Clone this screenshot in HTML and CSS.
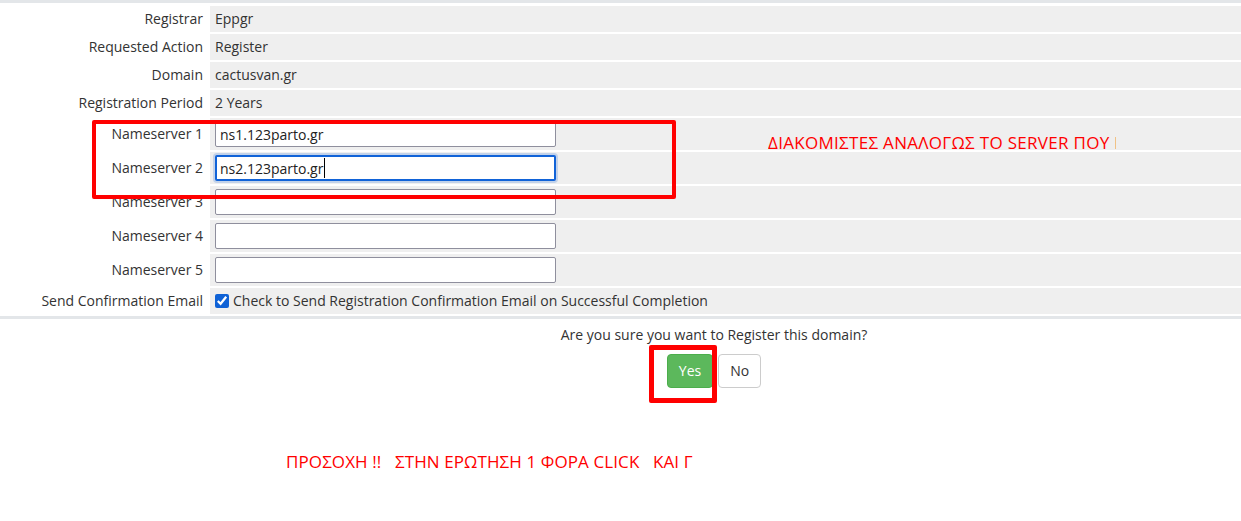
FILE: index.html
```html
<!DOCTYPE html>
<html lang="en">

<head>
    <meta charset="UTF-8">
    <meta name="viewport" content="width=device-width, initial-scale=1.0">
    <title>Domain Registration</title>
    <link rel="stylesheet" href="styles.css">
</head>

<body>

    <div class="page">
        <div class="form-table">
            <table>
                <tr>
                    <td class="label">Registrar</td>
                    <td class="value">Eppgr</td>
                </tr>
                <tr>
                    <td class="label">Requested Action</td>
                    <td class="value">Register</td>
                </tr>
                <tr>
                    <td class="label">Domain</td>
                    <td class="value">cactusvan.gr</td>
                </tr>
                <tr>
                    <td class="label">Registration Period</td>
                    <td class="value">2 Years</td>
                </tr>
                <tr class="ns-row">
                    <td class="label">Nameserver 1</td>
                    <td class="value"><input type="text" value="ns1.123parto.gr"></td>
                </tr>
                <tr class="ns-row">
                    <td class="label">Nameserver 2</td>
                    <td class="value">
                        <span class="field">
                            <input type="text" class="focused" value="ns2.123parto.gr">
                            <span class="caret"></span>
                        </span>
                    </td>
                </tr>
                <tr class="ns-row">
                    <td class="label">Nameserver 3</td>
                    <td class="value"><input type="text"></td>
                </tr>
                <tr class="ns-row">
                    <td class="label">Nameserver 4</td>
                    <td class="value"><input type="text"></td>
                </tr>
                <tr class="ns-row">
                    <td class="label">Nameserver 5</td>
                    <td class="value"><input type="text"></td>
                </tr>
                <tr>
                    <td class="label">Send Confirmation Email</td>
                    <td class="value">
                        <label class="check">
                            <input type="checkbox" checked>
                            Check to Send Registration Confirmation Email on Successful Completion
                        </label>
                    </td>
                </tr>
            </table>
        </div>

        <div class="confirm">
            <p>Are you sure you want to Register this domain?</p>
            <div class="buttons">
                <button class="btn btn-yes">Yes</button>
                <button class="btn btn-no">No</button>
            </div>
        </div>

        <!-- annotations drawn over the screenshot -->
        <div class="mark mark-ns"></div>
        <div class="mark mark-yes"></div>
        <div class="note note-ns">ΔΙΑΚΟΜΙΣΤΕΣ ΑΝΑΛΟΓΩΣ ΤΟ SERVER ΠΟΥ Ε</div>
        <div class="note note-click">ΠΡΟΣΟΧΗ !!   ΣΤΗΝ ΕΡΩΤΗΣΗ 1 ΦΟΡΑ CLICK   ΚΑΙ Γ</div>
    </div>

</body>

</html>
```

FILE: styles.css
```css
* {
    margin: 0;
    padding: 0;
    box-sizing: border-box;
}

body {
    font-family: 'Open Sans', sans-serif;
    font-size: 14px;
    line-height: 20px;
    color: #333;
    background: #fff;
    overflow: hidden;
}

.page {
    position: relative;
    width: 1428px;
    height: 521px;
}

.form-table {
    border-top: 3px solid #e3e6e9;
    border-bottom: 3px solid #e3e6e9;
    padding-top: 1px;
}

table {
    width: 100%;
    border-collapse: separate;
    border-spacing: 2px;
}

td {
    padding: 3px 5px;
    vertical-align: middle;
}

td.label {
    width: 206px;
    text-align: right;
    white-space: nowrap;
}

td.value {
    background: #efefef;
}

.ns-row td {
    height: 32px;
}

.value input[type="text"] {
    display: block;
    width: 341px;
    height: 26px;
    padding: 0 4px;
    font-family: 'Open Sans', sans-serif;
    font-size: 14px;
    color: #222;
    border: 1px solid #8f8f9d;
    border-radius: 2px;
    background: #fff;
}

.field {
    position: relative;
    display: block;
}

.value input.focused {
    border: 2px solid #1163d8;
    padding: 0 3px;
    outline: none;
    box-shadow: 0 0 0 2px #c2d2ea;
}

.caret {
    position: absolute;
    left: 109px;
    top: 3px;
    width: 1px;
    height: 20px;
    background: #000;
}

.check {
    display: flex;
    align-items: center;
    gap: 4px;
}

.check input {
    width: 14px;
    height: 14px;
    accent-color: #0f62d6;
}

.confirm {
    text-align: center;
    padding-top: 6px;
}

.confirm p {
    margin-bottom: 9px;
}

.buttons {
    display: flex;
    justify-content: center;
    gap: 5px;
}

.btn {
    font-family: 'Open Sans', sans-serif;
    font-size: 14px;
    line-height: 20px;
    padding: 6px 11px;
    border-radius: 4px;
    border: 1px solid transparent;
    cursor: pointer;
}

.btn-yes {
    background: #5cb85c;
    border-color: #4cae4c;
    color: #fff;
}

.btn-no {
    background: #fff;
    border-color: #ccc;
    color: #333;
}

.mark {
    position: absolute;
    border: 4px solid #ff0000;
    border-radius: 2px;
}

.mark-ns {
    left: 92px;
    top: 120px;
    width: 584px;
    height: 79px;
}

.mark-yes {
    left: 649px;
    top: 345px;
    width: 68px;
    height: 58px;
    border-width: 5px;
}

.note {
    position: absolute;
    color: #ff0000;
    font-family: 'Open Sans', sans-serif;
    font-size: 17px;
    letter-spacing: 0.3px;
    line-height: 22px;
    white-space: pre;
}

.note-ns {
    left: 768px;
    top: 132px;
    width: 348px;
    overflow: hidden;
}

.note-click {
    left: 286px;
    top: 451px;
    letter-spacing: 0.1px;
}
```
